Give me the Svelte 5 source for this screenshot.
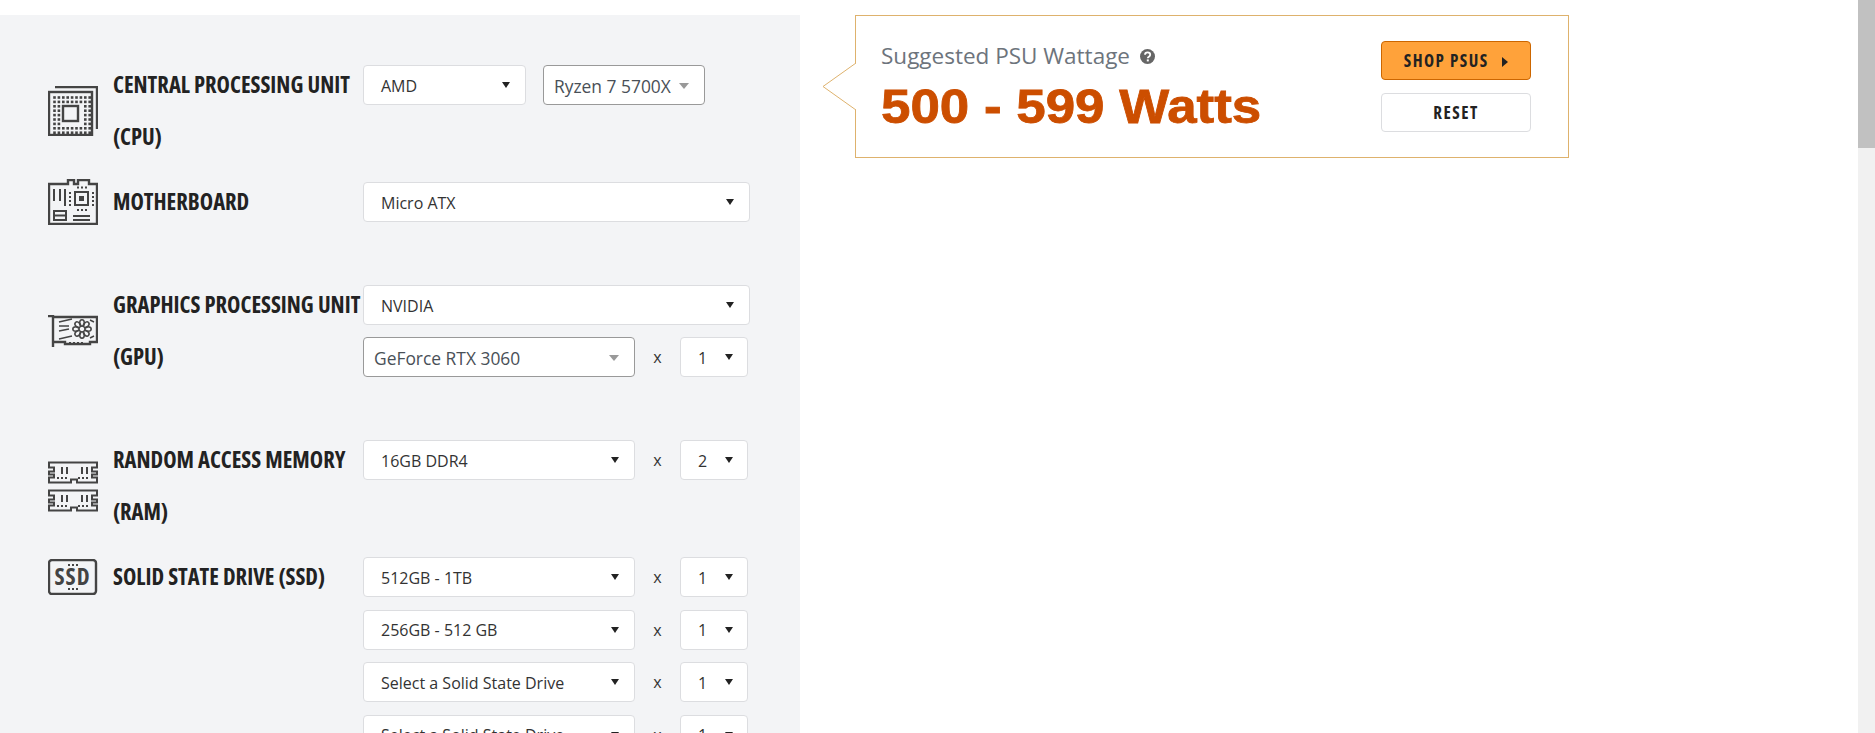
<script>
  // PSU calculator form state
  const ssdRows = ['512GB - 1TB', '256GB - 512 GB', 'Select a Solid State Drive', 'Select a Solid State Drive'];
  const dots = [];
  for (let i = 0; i < 9; i++) {
    for (let j = 0; j < 9; j++) {
      if (i > 1 && i < 7 && j > 1 && j < 7) continue;
      dots.push({ x: 5.2 + i * 4.4, y: 5.2 + j * 4.4 });
    }
  }
  const petals = [0, 45, 90, 135, 180, 225, 270, 315];
</script>

<div class="page">
  <section class="form-panel">
    <div class="row">
      <div class="part">
        <svg class="icon" width="50" height="50" viewBox="0 0 50 50">
          <path d="M7 1h43M49 0v43" class="line" />
          <rect x="1" y="6" width="43" height="43" class="line" />
          <g transform="translate(0 5)">
            {#each dots as d}
              <rect x={d.x} y={d.y} width="2.6" height="2.6" fill="#444" />
            {/each}
          </g>
          <rect x="15" y="20" width="15" height="15" class="line" />
        </svg>
        <div class="label">CENTRAL PROCESSING UNIT (CPU)</div>
      </div>
      <div class="controls inline">
        <div class="select cpu-brand">AMD<i class="caret"></i></div>
        <div class="select picked cpu-model">Ryzen 7 5700X<i class="caret"></i></div>
      </div>
    </div>

    <div class="row wide-gap">
      <div class="part">
        <svg class="icon" width="50" height="46" viewBox="0 0 50 46">
          <path d="M1 45V5h19V1h6v4h4V1h11v4h8v40z" class="line" />
          <path d="M6 10v12M12 10v12M17 10v17" class="line thick" />
          <rect x="6" y="32" width="12" height="9" class="line thick" />
          <path d="M6 36.500h12M25 37h17M25 41h17" class="line thick" />
          <rect x="27" y="13" width="13" height="13" class="line thick" />
          <rect x="31" y="17" width="5" height="5" fill="#444" />
          <path d="M29 8.500h11M29 31h11M22 13v14M45 13v14" class="dash" />
        </svg>
        <div class="label">MOTHERBOARD</div>
      </div>
      <div class="controls">
        <div class="select full">Micro ATX<i class="caret"></i></div>
      </div>
    </div>

    <div class="row wide-gap">
      <div class="part">
        <svg class="icon" width="50" height="33" viewBox="0 0 50 33">
          <path d="M0 1h5v31" class="line" />
          <path d="M5 2h44v25H42v2H17v-2H5" class="line" />
          <path d="M11 7l13-3M11 11l10 0M11 16l10-2M11 24l13-3" class="line thin" />
          <g transform="translate(34 14)">
            {#each petals as a}
              <ellipse cx="0" cy="-6" rx="2.300" ry="3.200" transform="rotate({a})" class="line thin" />
            {/each}
          </g>
          <path d="M42 5l4 2M42 23l4-2" class="line thin" />
          <path d="M21 28h14" class="dash" />
        </svg>
        <div class="label">GRAPHICS PROCESSING UNIT (GPU)</div>
      </div>
      <div class="controls">
        <div class="select full">NVIDIA<i class="caret"></i></div>
        <div class="line-item">
          <div class="select picked item">GeForce RTX 3060<i class="caret"></i></div>
          <span class="times">x</span>
          <div class="select qty">1<i class="caret"></i></div>
        </div>
      </div>
    </div>

    <div class="row">
      <div class="part">
        <svg class="icon" width="50" height="51" viewBox="0 0 50 51">
          {#each [0, 28] as y}
            <g transform="translate(0 {y})">
              <path d="M1 1.500h48v5h-5v4h5v3h-5v3h5v5H29v-3h-6v3H1v-5h5v-3H1v-3h5v-4H1z" class="line thick" />
              <path d="M14 6v7M19 6v7M34 6v7M39 6v7" class="line thick" />
              <path d="M9 17h11M30 17h11" class="dash" />
            </g>
          {/each}
        </svg>
        <div class="label">RANDOM ACCESS MEMORY (RAM)</div>
      </div>
      <div class="controls">
        <div class="line-item">
          <div class="select item">16GB DDR4<i class="caret"></i></div>
          <span class="times">x</span>
          <div class="select qty">2<i class="caret"></i></div>
        </div>
      </div>
    </div>

    <div class="row">
      <div class="part">
        <svg class="icon" width="50" height="36" viewBox="0 0 50 36">
          <rect x="1" y="1" width="47" height="34" rx="3" class="line" />
          <path d="M20 6h10M20 30h10" class="dash" />
          <text x="24.500" y="26" text-anchor="middle" class="ssd-text">SSD</text>
        </svg>
        <div class="label">SOLID STATE DRIVE (SSD)</div>
      </div>
      <div class="controls ssd-list">
        {#each ssdRows as name}
          <div class="line-item">
            <div class="select item">{name}<i class="caret"></i></div>
            <span class="times">x</span>
            <div class="select qty">1<i class="caret"></i></div>
          </div>
        {/each}
      </div>
    </div>
  </section>

  <aside class="result">
    <svg class="pointer" width="34" height="50" viewBox="0 0 34 50">
      <path d="M34 1L1 24.500 34 48" fill="#fff" stroke="#deb26d" stroke-width="1" />
    </svg>
    <div class="summary">
      <div class="caption">
        Suggested PSU Wattage
        <svg class="help" width="15" height="15" viewBox="0 0 15 15">
          <circle cx="7.500" cy="7.500" r="7.500" fill="#666" />
          <path d="M5 5.800c0-3.200 5.200-3.200 5.200 0 0 2-2.400 1.800-2.400 3.400" fill="none" stroke="#fff" stroke-width="1.800" />
          <rect x="6.800" y="10.400" width="2" height="2" fill="#fff" />
        </svg>
      </div>
      <div class="watts">500 - 599 Watts</div>
    </div>
    <div class="actions">
      <button class="btn shop">SHOP PSUS <i class="arrow"></i></button>
      <button class="btn">RESET</button>
    </div>
  </aside>

  <div class="scrollbar"><div class="thumb"></div></div>
</div>

<style>
  :global(body) {
    overflow: hidden;
  }

  .page {
    position: relative;
    display: flex;
    align-items: flex-start;
    height: 733px;
    overflow: hidden;
    font-family: 'Open Sans', sans-serif;
    color: #222;
    background: #fff;
  }

  .form-panel {
    width: 800px;
    height: 718px;
    margin-top: 15px;
    padding-top: 44px;
    box-sizing: border-box;
    flex: none;
    background: #f3f4f6;
  }

  .row {
    display: flex;
    align-items: flex-start;
    margin-bottom: 13px;
  }

  .wide-gap {
    margin-bottom: 51px;
  }

  .part {
    display: flex;
    align-items: center;
    width: 363px;
    padding-left: 48px;
    box-sizing: border-box;
    flex: none;
  }

  .icon {
    flex: none;
    display: block;
    margin-right: 15px;
  }

  .line {
    fill: none;
    stroke: #444;
    stroke-width: 2.4;
  }

  .line.thin {
    stroke-width: 1.5;
  }

  .line.thick {
    stroke-width: 2;
  }

  .dash {
    fill: none;
    stroke: #444;
    stroke-width: 2;
    stroke-dasharray: 2 2;
  }

  .ssd-text {
    font-family: 'Open Sans', sans-serif;
    font-size: 23px;
    font-weight: 700;
    font-stretch: 75%;
    letter-spacing: 1px;
    fill: #444;
  }

  .label {
    width: 250px;
    font-size: 22.6px;
    line-height: 52px;
    font-weight: 700;
    font-stretch: 75%;
    color: #222;
  }

  .controls {
    display: flex;
    flex-direction: column;
    gap: 12px;
    padding-top: 6px;
  }

  .controls.inline {
    flex-direction: row;
    gap: 17px;
  }

  .ssd-list {
    gap: 12.5px;
  }

  .line-item {
    display: flex;
    align-items: center;
  }

  .select {
    position: relative;
    height: 40px;
    padding: 1px 0 0 17px;
    box-sizing: border-box;
    display: flex;
    align-items: center;
    background: #fff;
    border: 1px solid #dcdde0;
    border-radius: 4px;
    font-size: 16px;
    color: #333;
  }

  .caret {
    position: absolute;
    right: 15px;
    top: 16px;
    border-left: 4.5px solid transparent;
    border-right: 4.5px solid transparent;
    border-top: 6px solid #222;
  }

  .picked {
    padding-left: 10px;
    border-color: #999;
    font-size: 17.4px;
    color: #495057;
  }

  .picked .caret {
    right: 15px;
    top: 17px;
    border-left-width: 5px;
    border-right-width: 5px;
    border-top: 6px solid #999;
  }

  .cpu-brand {
    width: 163px;
  }

  .cpu-model {
    width: 162px;
  }

  .full {
    width: 387px;
  }

  .item {
    width: 272px;
  }

  .times {
    width: 45px;
    text-align: center;
    font-size: 16px;
    color: #333;
  }

  .qty {
    width: 68px;
  }

  .qty .caret {
    right: 14px;
  }

  .result {
    position: relative;
    display: flex;
    justify-content: space-between;
    width: 714px;
    height: 143px;
    margin: 15px 0 0 55px;
    padding: 25px 37px 0 25px;
    box-sizing: border-box;
    background: #fff;
    border: 1px solid #deb26d;
  }

  .pointer {
    position: absolute;
    left: -34px;
    top: 46px;
  }

  .caption {
    display: flex;
    align-items: center;
    gap: 10px;
    font-size: 22.5px;
    line-height: 30px;
    color: #6d747c;
  }

  .watts {
    margin-top: 8px;
    font-family: 'Liberation Sans', Arial, sans-serif;
    font-size: 48px;
    line-height: 56px;
    font-weight: 700;
    color: #cc4e00;
    -webkit-text-stroke: 0.8px #cc4e00;
    transform: scaleX(1.102);
    transform-origin: left;
  }

  .actions {
    display: flex;
    flex-direction: column;
    gap: 13px;
  }

  .btn {
    width: 150px;
    height: 39px;
    padding: 0;
    background: #fff;
    border: 1px solid #dcdde0;
    border-radius: 4px;
    font-family: 'Open Sans', sans-serif;
    font-size: 17px;
    font-weight: 700;
    font-stretch: 75%;
    letter-spacing: 1.5px;
    color: #222;
  }

  .shop {
    background: #ffa23a;
    border-color: #cc6600;
  }

  .arrow {
    display: inline-block;
    margin-left: 9px;
    border-top: 5px solid transparent;
    border-bottom: 5px solid transparent;
    border-left: 6px solid #222;
  }

  .scrollbar {
    position: absolute;
    top: 0;
    right: 0;
    width: 17px;
    height: 733px;
    background: #f1f1f1;
  }

  .thumb {
    height: 148px;
    background: #c1c1c1;
  }
</style>
